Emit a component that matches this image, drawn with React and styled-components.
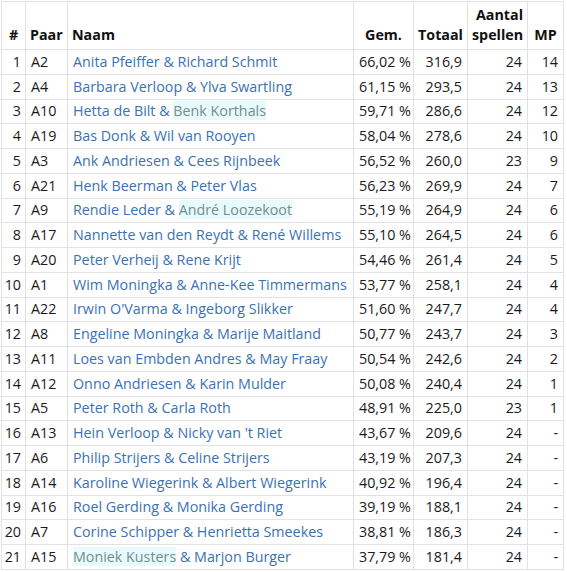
import React from "react";
import styled, { createGlobalStyle } from "styled-components";

const GlobalStyle = createGlobalStyle`
  body {
    margin: 0;
    background: #ffffff;
    font-family: "Open Sans", "Noto Sans", sans-serif;
  }
`;

const rows = [
  ["A2", [["Anita Pfeiffer & Richard Schmit"]], "66,02 %", "316,9", "24", "14"],
  ["A4", [["Barbara Verloop & Ylva Swartling"]], "61,15 %", "293,5", "24", "13"],
  ["A10", [["Hetta de Bilt & "], ["Benk Korthals", true]], "59,71 %", "286,6", "24", "12"],
  ["A19", [["Bas Donk & Wil van Rooyen"]], "58,04 %", "278,6", "24", "10"],
  ["A3", [["Ank Andriesen & Cees Rijnbeek"]], "56,52 %", "260,0", "23", "9"],
  ["A21", [["Henk Beerman & Peter Vlas"]], "56,23 %", "269,9", "24", "7"],
  ["A9", [["Rendie Leder & "], ["André Loozekoot", true]], "55,19 %", "264,9", "24", "6"],
  ["A17", [["Nannette van den Reydt & René Willems"]], "55,10 %", "264,5", "24", "6"],
  ["A20", [["Peter Verheij & Rene Krijt"]], "54,46 %", "261,4", "24", "5"],
  ["A1", [["Wim Moningka & Anne-Kee Timmermans"]], "53,77 %", "258,1", "24", "4"],
  ["A22", [["Irwin O'Varma & Ingeborg Slikker"]], "51,60 %", "247,7", "24", "4"],
  ["A8", [["Engeline Moningka & Marije Maitland"]], "50,77 %", "243,7", "24", "3"],
  ["A11", [["Loes van Embden Andres & May Fraay"]], "50,54 %", "242,6", "24", "2"],
  ["A12", [["Onno Andriesen & Karin Mulder"]], "50,08 %", "240,4", "24", "1"],
  ["A5", [["Peter Roth & Carla Roth"]], "48,91 %", "225,0", "23", "1"],
  ["A13", [["Hein Verloop & Nicky van 't Riet"]], "43,67 %", "209,6", "24", "-"],
  ["A6", [["Philip Strijers & Celine Strijers"]], "43,19 %", "207,3", "24", "-"],
  ["A14", [["Karoline Wiegerink & Albert Wiegerink"]], "40,92 %", "196,4", "24", "-"],
  ["A16", [["Roel Gerding & Monika Gerding"]], "39,19 %", "188,1", "24", "-"],
  ["A7", [["Corine Schipper & Henrietta Smeekes"]], "38,81 %", "186,3", "24", "-"],
  ["A15", [["Moniek Kusters", true], [" & Marjon Burger"]], "37,79 %", "181,4", "24", "-"],
];

const Page = styled.div`
  padding: 1px 0 0 1px;
`;

const Table = styled.table`
  border-collapse: collapse;
  font-size: 14.3px;
  color: #1a1a1a;
  table-layout: fixed;
  width: 562px;
`;

const Th = styled.th`
  border: 1px solid #e2e2e2;
  padding: 0 4px 4px 4px;
  height: 43px;
  vertical-align: bottom;
  text-align: ${(p) => p.$align || "center"};
  font-weight: 700;
  line-height: 20px;
  color: #111;
`;

const Row = styled.tr`
  height: 24.75px;
`;

const Td = styled.td`
  border: 1px solid #e2e2e2;
  padding: 0 5px;
  text-align: ${(p) => p.$align || "right"};
  white-space: nowrap;
  line-height: 18px;
`;

const NumTd = styled(Td)`
  padding: 0 4px 0 2px;
`;

const Name = styled.span`
  color: #3a72b4;
`;

const Faded = styled.span`
  color: #7a8a8c;
  background: #e6fbfd;
`;

export default function App() {
  return (
    <Page>
      <GlobalStyle />
      <Table>
        <colgroup>
          <col style={{ width: 24 }} />
          <col style={{ width: 42 }} />
          <col style={{ width: 286 }} />
          <col style={{ width: 60 }} />
          <col style={{ width: 54 }} />
          <col style={{ width: 60 }} />
          <col style={{ width: 36 }} />
        </colgroup>
        <thead>
          <tr>
            <Th>#</Th>
            <Th $align="left">Paar</Th>
            <Th $align="left">Naam</Th>
            <Th>Gem.</Th>
            <Th>Totaal</Th>
            <Th $align="right">
              Aantal
              <br />
              spellen
            </Th>
            <Th>MP</Th>
          </tr>
        </thead>
        <tbody>
          {rows.map((r, i) => (
            <Row key={r[0]}>
              <NumTd>{i + 1}</NumTd>
              <Td $align="left">{r[0]}</Td>
              <Td $align="left">
                {r[1].map(([text, faded], j) =>
                  faded ? <Faded key={j}>{text}</Faded> : <Name key={j}>{text}</Name>
                )}
              </Td>
              <Td>{r[2]}</Td>
              <Td>{r[3]}</Td>
              <Td>{r[4]}</Td>
              <Td>{r[5]}</Td>
            </Row>
          ))}
        </tbody>
      </Table>
    </Page>
  );
}
